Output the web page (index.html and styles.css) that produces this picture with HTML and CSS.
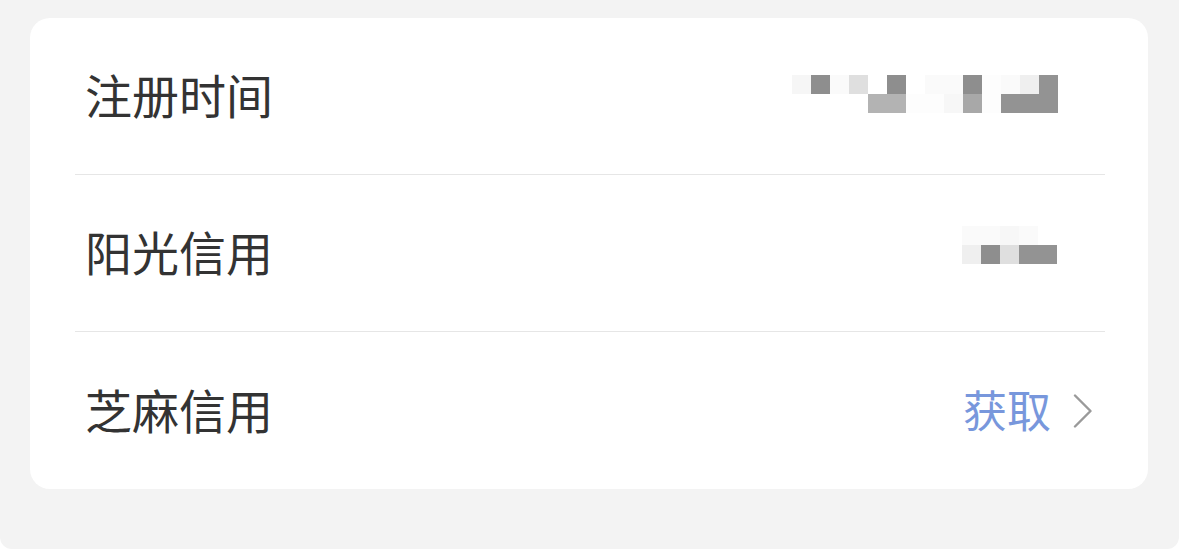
FILE: index.html
```html
<!DOCTYPE html>
<html lang="zh-CN">
<head>
<meta charset="utf-8">
<title>信用信息</title>
<link rel="stylesheet" href="styles.css">
</head>
<body>
<div class="page">
  <div class="card">
    <div class="row">
      <span class="label">注册时间</span>
      <div class="mosaic mosaic-wide">
        <i class="m6"></i><i class="m8"></i><i class="m2"></i><i class="me"></i><i class="m0"></i><i class="m8"></i><i class="m0"></i><i class="m2"></i><i class="m2"></i><i class="m8"></i><i class="m1"></i><i class="m2"></i><i class="m5"></i><i class="m9"></i>
        <i class="m0"></i><i class="m0"></i><i class="m0"></i><i class="m0"></i><i class="mb"></i><i class="mb"></i><i class="m1"></i><i class="m1"></i><i class="m3"></i><i class="ma"></i><i class="m1"></i><i class="m9"></i><i class="m9"></i><i class="m9"></i>
      </div>
    </div>
    <div class="row">
      <span class="label">阳光信用</span>
      <div class="mosaic mosaic-short">
        <i class="m2"></i><i class="m2"></i><i class="m3"></i><i class="m2"></i><i class="m0"></i>
        <i class="m5"></i><i class="m8"></i><i class="me"></i><i class="m9"></i><i class="m9"></i>
      </div>
    </div>
    <div class="row">
      <span class="label">芝麻信用</span>
      <div class="action">
        <span class="link">获取</span>
        <svg class="chevron" width="20" height="34" viewBox="0 0 20 34" aria-hidden="true">
          <path d="M2 1.5 L17.5 17 L2 32.5" fill="none" stroke="#9a9a9a" stroke-width="2.4" stroke-linecap="round" stroke-linejoin="round"/>
        </svg>
      </div>
    </div>
  </div>
</div>
</body>
</html>
```

FILE: styles.css
```css
html {
  background: #ffffff;
}

body {
  margin: 0;
  font-family: "Noto Sans CJK SC", "Noto Sans", sans-serif;
}

.page {
  box-sizing: border-box;
  width: 1179px;
  height: 549px;
  background: #f3f3f3;
  padding: 18px 31px 0 30px;
  border-radius: 0 0 12px 12px;
}

.card {
  background: #ffffff;
  border-radius: 20px;
  padding: 0 43px 0 45px;
  display: flex;
  flex-direction: column;
}

.row {
  height: 156px;
  display: flex;
  align-items: center;
  justify-content: space-between;
  border-bottom: 1px solid #e6e6e6;
}

.row:last-child {
  height: 157px;
  border-bottom: none;
}

.label {
  font-size: 47px;
  color: #333333;
  line-height: 1;
  padding-left: 10px;
  margin-bottom: 5px;
}

.mosaic {
  display: grid;
  grid-auto-rows: 19px;
}

.mosaic i {
  display: block;
}

.mosaic-wide {
  grid-template-columns: repeat(14, 19px);
  margin: 0 47px 4px 0;
}

.mosaic-short {
  grid-template-columns: repeat(5, 19px);
  margin: 0 48px 16px 0;
}

.m0 { background: #ffffff; }
.m1 { background: #fdfdfd; }
.m2 { background: #fafafa; }
.m3 { background: #f7f7f7; }
.m5 { background: #efefef; }
.m6 { background: #f6f6f6; }
.me { background: #dfdfdf; }
.mb { background: #b3b3b3; }
.ma { background: #a8a8a8; }
.m8 { background: #8e8e8e; }
.m9 { background: #939393; }

.action {
  display: flex;
  align-items: center;
  gap: 22px;
  margin-right: 12px;
}

.link {
  font-size: 44px;
  line-height: 1;
  color: #7897dc;
  margin-bottom: 4px;
}

.chevron {
  display: block;
}
```
